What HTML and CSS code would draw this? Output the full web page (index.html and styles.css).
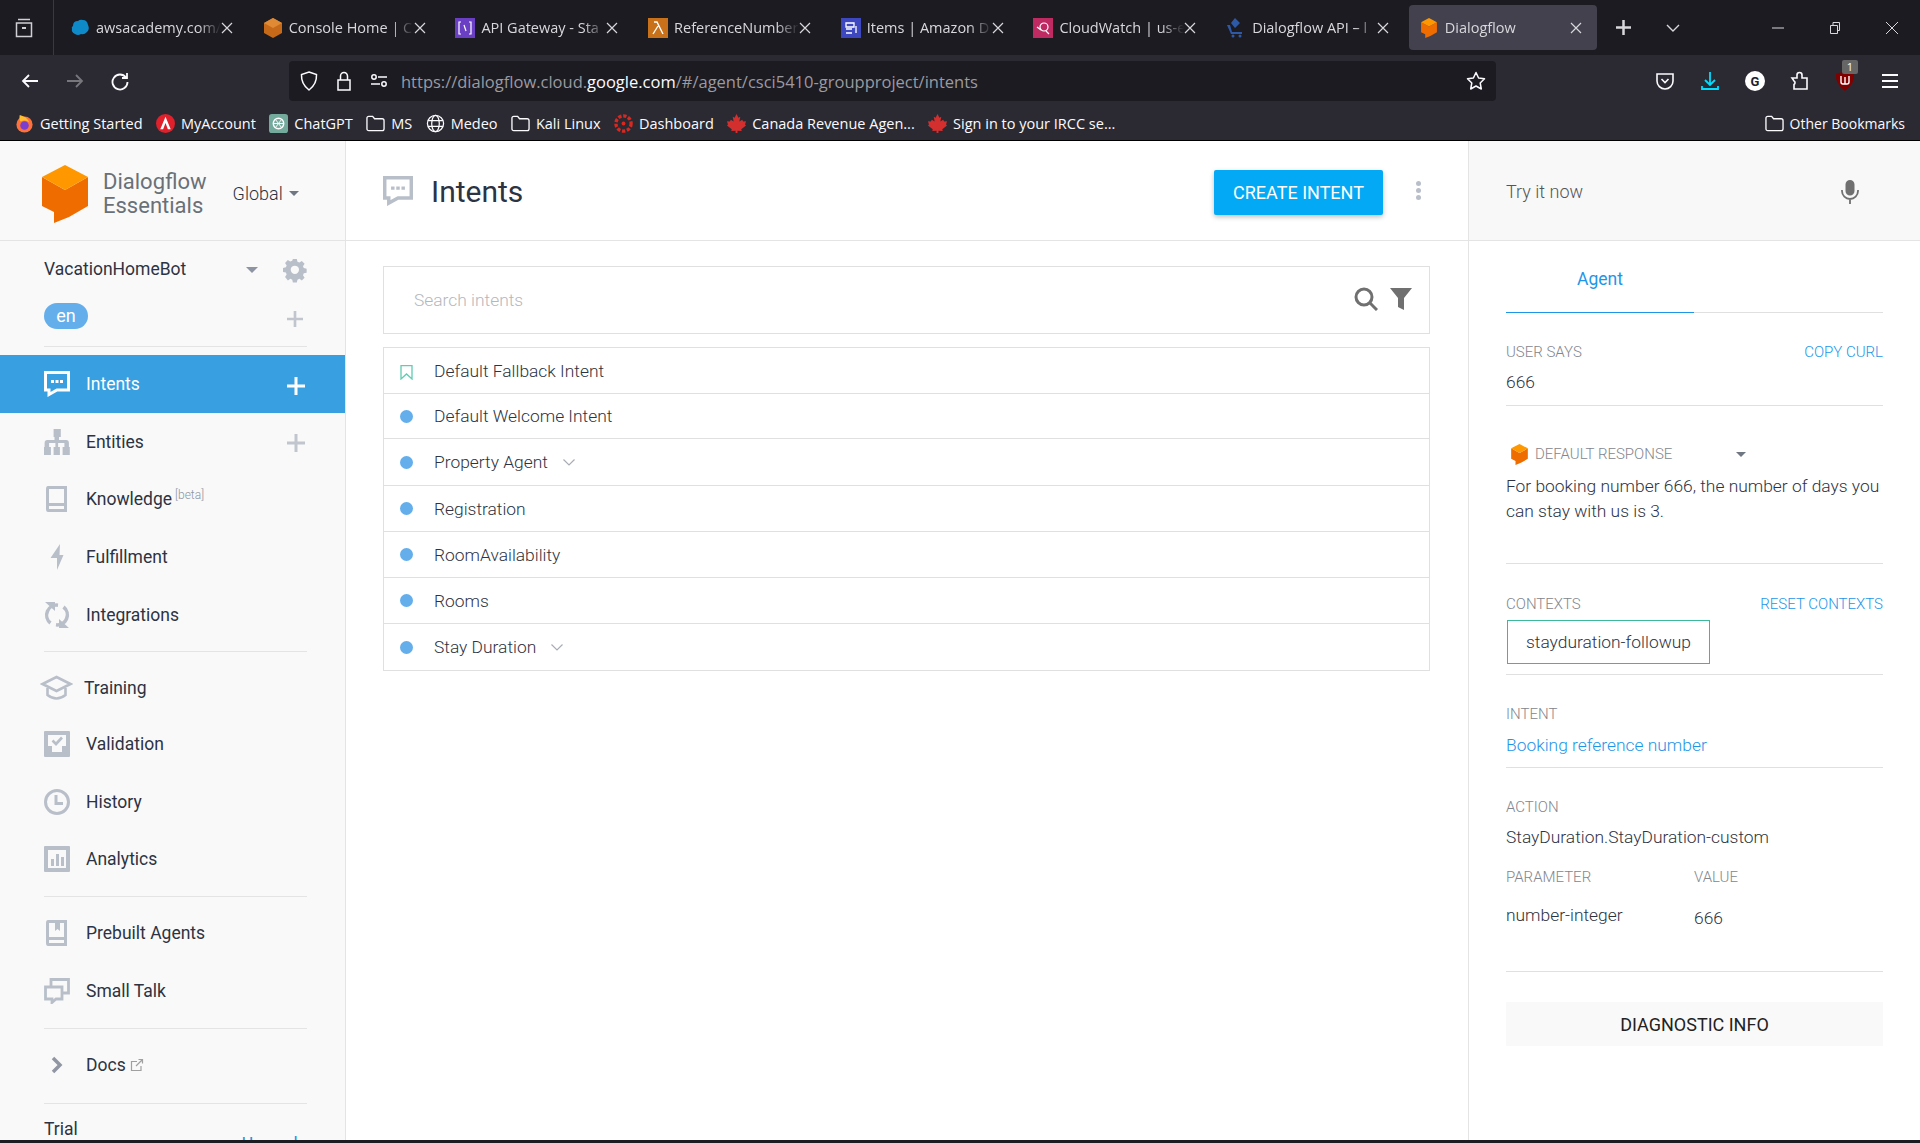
FILE: index.html
```html
<!DOCTYPE html>
<html>
<head>
    <title>Dialogflow</title>
    <meta charset="UTF-8">
    <link rel="stylesheet" href="styles.css">
</head>
<body>
    <svg class="defs" width="0" height="0">
        <symbol id="cube" viewBox="0 0 46 58">
            <path fill="#ef6c00" d="M0 12 23 25 46 12V41L27 52 12 58V47L0 41Z"/>
            <path fill="#ff9800" d="M23 0 46 12 23 25 0 12Z"/>
        </symbol>
        <symbol id="plus" viewBox="0 0 18 18">
            <path fill="currentColor" d="M7.5 0h3v7.5H18v3h-7.5V18h-3v-7.5H0v-3h7.5z"/>
        </symbol>
        <symbol id="close" viewBox="0 0 12 12">
            <path fill="none" stroke="currentColor" stroke-width="1.2" d="M1 1l10 10M11 1L1 11"/>
        </symbol>
        <symbol id="folder" viewBox="0 0 20 18">
            <path fill="none" stroke="currentColor" stroke-width="1.4" d="M1 3.5Q1 1.5 3 1.5H7L9 4H17Q19 4 19 6V14.5Q19 16.5 17 16.5H3Q1 16.5 1 14.5Z"/>
        </symbol>
        <symbol id="maple" viewBox="0 0 20 20">
            <path fill="#d32f2f" d="M10 0l2 4 2-1-1 5 3-2 1 2 3-.5-1 3.500 1 1-5 4 .5 2-4.500-.5V20H9v-2.500L4.500 18l.5-2-5-4 1-1-1-3.500L3 8l1-2 3 2-1-5 2 1z"/>
        </symbol>
        <symbol id="chat" viewBox="0 0 26 26">
            <path fill="none" stroke="currentColor" stroke-width="3" d="M1.500 1.500H24.500V19H13L5 23.500V19H1.500Z"/>
            <path fill="currentColor" d="M7 9h3v3H7zM11.500 9h3v3h-3zM16 9h3v3h-3z"/>
        </symbol>
    </svg>

    <header class="browser">
        <div class="tab-bar">
            <div class="view-btn">
                <svg width="18" height="20" viewBox="0 0 18 20"><path fill="none" stroke="#d0d0d4" stroke-width="1.500" d="M3 1.500H15M1.500 5H16.500V18.500H1.500Z"/><path fill="#d0d0d4" d="M7 9h4v2H7z"/></svg>
            </div>
            <div class="tabs">
                <div class="tab">
                    <svg class="favicon" viewBox="0 0 20 20"><path fill="#0f8ac9" d="M3 8Q3 3 8 3 10 1 13 2 17 2 18 7 20 11 17 14 14 17 11 16 8 18 5 16 1 14 2 11 1 9 3 8Z"/></svg>
                    <span class="tab-title">awsacademy.com/</span>
                    <svg class="tab-close"><use href="#close"/></svg>
                </div>
                <div class="tab">
                    <svg class="favicon" viewBox="0 0 18 20"><path fill="#c66a1a" d="M9 0 18 5V15L9 20 0 15V5Z"/><path fill="#e08a35" d="M9 0 18 5 9 10 0 5Z"/></svg>
                    <span class="tab-title">Console Home | C</span>
                    <svg class="tab-close"><use href="#close"/></svg>
                </div>
                <div class="tab">
                    <svg class="favicon" viewBox="0 0 20 20"><path fill="#6b3fc4" d="M0 0h20v20H0z"/><path fill="none" stroke="#fff" stroke-width="1.200" d="M6 4H4V16H6M14 4h2V16H14M9 7l2 6"/></svg>
                    <span class="tab-title">API Gateway - Sta</span>
                    <svg class="tab-close"><use href="#close"/></svg>
                </div>
                <div class="tab">
                    <svg class="favicon" viewBox="0 0 20 20"><path fill="#c8701a" d="M0 0h20v20H0z"/><path fill="none" stroke="#fff" stroke-width="1.400" d="M6 4H9L15 16M10 8 5 16"/></svg>
                    <span class="tab-title">ReferenceNumber</span>
                    <svg class="tab-close"><use href="#close"/></svg>
                </div>
                <div class="tab">
                    <svg class="favicon" viewBox="0 0 20 20"><path fill="#3d48c0" d="M0 0h20v20H0z"/><path fill="none" stroke="#fff" stroke-width="1.300" d="M5 5H13V9H5ZM5 11H11M5 15H11M15 8V15"/></svg>
                    <span class="tab-title">Items | Amazon D</span>
                    <svg class="tab-close"><use href="#close"/></svg>
                </div>
                <div class="tab">
                    <svg class="favicon" viewBox="0 0 20 20"><path fill="#bf2a62" d="M0 0h20v20H0z"/><circle cx="11" cy="9" r="4" fill="none" stroke="#fff" stroke-width="1.200"/><path fill="none" stroke="#fff" stroke-width="1.200" d="M8 12 4 9M13 13l3 3"/></svg>
                    <span class="tab-title">CloudWatch | us-e</span>
                    <svg class="tab-close"><use href="#close"/></svg>
                </div>
                <div class="tab">
                    <svg class="favicon" viewBox="0 0 20 20"><path fill="#2d5aa8" d="M9 0 14 5 9 10 5 5ZM1 7H4L6 14H16V16H5Z"/><circle cx="7" cy="18" r="1.500" fill="#2d5aa8"/><circle cx="14" cy="18" r="1.500" fill="#2d5aa8"/></svg>
                    <span class="tab-title">Dialogflow API – l</span>
                    <svg class="tab-close"><use href="#close"/></svg>
                </div>
                <div class="tab active">
                    <svg class="favicon" viewBox="0 0 46 58"><use href="#cube"/></svg>
                    <span class="tab-title">Dialogflow</span>
                    <svg class="tab-close"><use href="#close"/></svg>
                </div>
            </div>
            <svg class="new-tab"><use href="#plus"/></svg>
            <svg class="tab-list" viewBox="0 0 14 8"><path fill="none" stroke="currentColor" stroke-width="1.400" d="M1 1l6 6 6-6"/></svg>
            <div class="window-btns">
                <svg viewBox="0 0 14 14"><path stroke="currentColor" d="M1 7h12"/></svg>
                <svg viewBox="0 0 14 14"><path fill="none" stroke="currentColor" d="M2.500 4.500h7v8h-7zM5 4.500V1.500h6.500v8h-2"/></svg>
                <svg viewBox="0 0 14 14"><path fill="none" stroke="currentColor" d="M1 1l12 12M13 1L1 13"/></svg>
            </div>
        </div>

        <div class="toolbar">
            <div class="nav-btns">
                <svg viewBox="0 0 20 20"><path fill="none" stroke="#fbfbfe" stroke-width="1.800" d="M18 10H3M9 4l-6 6 6 6"/></svg>
                <svg class="dim" viewBox="0 0 20 20"><path fill="none" stroke="#77767d" stroke-width="1.800" d="M2 10H17M11 4l6 6-6 6"/></svg>
                <svg viewBox="0 0 20 20"><path fill="none" stroke="#fbfbfe" stroke-width="1.800" d="M16 6.500A7.500 7.500 0 1 0 17.500 11M17 2V7H12"/></svg>
            </div>
            <div class="urlbar">
                <svg class="url-icon" viewBox="0 0 18 20"><path fill="none" stroke="#fbfbfe" stroke-width="1.500" d="M9 1 16.500 3.500Q17 13 9 19 1 13 1.500 3.500Z"/></svg>
                <svg class="url-icon" viewBox="0 0 18 20"><path fill="none" stroke="#fbfbfe" stroke-width="1.500" d="M3 9H15V19H3ZM5.500 9V5A3.500 3.500 0 0 1 12.500 5V9"/></svg>
                <svg class="url-icon" viewBox="0 0 18 20"><path fill="none" stroke="#fbfbfe" stroke-width="1.500" d="M8 6H17M1 13H10"/><circle cx="4" cy="6" r="2.200" fill="none" stroke="#fbfbfe" stroke-width="1.500"/><circle cx="14" cy="13" r="2.200" fill="none" stroke="#fbfbfe" stroke-width="1.500"/></svg>
                <span class="url">https://dialogflow.cloud.<b>google.com</b>/#/agent/csci5410-groupproject/intents</span>
                <svg class="url-star" viewBox="0 0 20 20"><path fill="none" stroke="#fbfbfe" stroke-width="1.500" stroke-linejoin="round" d="M10 1.500 12.600 7 18.500 7.800 14.200 12 15.300 18 10 15 4.700 18 5.800 12 1.500 7.800 7.400 7Z"/></svg>
            </div>
            <div class="ext-btns">
                <svg viewBox="0 0 20 20"><path fill="none" stroke="#fbfbfe" stroke-width="1.600" d="M2 3H18V10A8 8 0 0 1 2 10Z"/><path fill="none" stroke="#fbfbfe" stroke-width="1.600" d="M6.500 8 10 11.500 13.500 8"/></svg>
                <svg viewBox="0 0 20 20"><path fill="none" stroke="#00ddff" stroke-width="1.800" d="M10 1V14M5 9l5 5 5-5M2 15v3H18v-3"/></svg>
                <svg viewBox="0 0 20 20"><circle cx="10" cy="10" r="10" fill="#fff"/><text class="g-letter" x="10" y="14.500" text-anchor="middle">G</text></svg>
                <svg viewBox="0 0 20 20"><path fill="none" stroke="#fbfbfe" stroke-width="1.600" d="M2 7H7V4A2.500 2.500 0 0 1 12 4V7H17V18H4V13.500A2 2 0 0 0 4 10Z"/></svg>
                <div class="ublock">
                    <svg viewBox="0 0 20 20"><path fill="#800000" d="M10 0 19 3Q20 13 10 20 0 13 1 3Z"/><path fill="none" stroke="#fff" stroke-width="1.400" d="M6 5V11Q6 13 8 13H12Q14 13 14 11V5M10 6V13"/></svg>
                    <span class="ublock-count">1</span>
                </div>
                <svg viewBox="0 0 20 20"><path stroke="#fbfbfe" stroke-width="1.800" d="M2 4H18M2 10H18M2 16H18"/></svg>
            </div>
        </div>

        <div class="bookmarks">
            <div class="mark">
                <svg viewBox="0 0 20 20"><circle cx="10" cy="11" r="8.500" fill="#ff7139"/><circle cx="10" cy="12" r="4.500" fill="#7b3fd0"/><path fill="#ffbd30" d="M5 1Q4 6 6 8 11 5 15 9 13 3 5 1Z"/></svg>
                Getting Started
            </div>
            <div class="mark">
                <svg viewBox="0 0 20 20"><circle cx="10" cy="10" r="10" fill="#e0212b"/><path fill="#fff" d="M10 3 15.500 16H12.500L10 9.500 7.500 16H4.500Z"/></svg>
                MyAccount
            </div>
            <div class="mark">
                <svg viewBox="0 0 20 20"><rect width="20" height="20" rx="3" fill="#74aa9c"/><circle cx="10" cy="10" r="5.500" fill="none" stroke="#fff" stroke-width="1.500"/><path fill="none" stroke="#fff" d="M7 6l6 8M13 6l-6 8M5 10h10"/></svg>
                ChatGPT
            </div>
            <div class="mark"><svg><use href="#folder"/></svg>MS</div>
            <div class="mark">
                <svg viewBox="0 0 20 20"><g fill="none" stroke="#fbfbfe" stroke-width="1.300"><circle cx="10" cy="10" r="8.500"/><ellipse cx="10" cy="10" rx="4" ry="8.500"/><path d="M2 7H18M2 13H18"/></g></svg>
                Medeo
            </div>
            <div class="mark"><svg><use href="#folder"/></svg>Kali Linux</div>
            <div class="mark">
                <svg viewBox="0 0 20 20"><circle cx="10" cy="10" r="8" fill="none" stroke="#d8281f" stroke-width="3.500" stroke-dasharray="3.500 1.800"/><circle cx="10" cy="10" r="2" fill="#d8281f"/></svg>
                Dashboard
            </div>
            <div class="mark"><svg><use href="#maple"/></svg>Canada Revenue Agen...</div>
            <div class="mark"><svg><use href="#maple"/></svg>Sign in to your IRCC se...</div>
            <div class="mark other"><svg><use href="#folder"/></svg>Other Bookmarks</div>
        </div>
    </header>

    <div class="app">
        <aside class="sidebar">
            <div class="brand">
                <svg class="brand-logo"><use href="#cube"/></svg>
                <div class="brand-name">Dialogflow<br>Essentials</div>
                <div class="region">Global<span class="caret"></span></div>
            </div>

            <div class="agent">
                <div class="agent-row">
                    <span class="agent-name">VacationHomeBot</span>
                    <span class="caret agent-caret"></span>
                    <svg class="gear" viewBox="-2 -1 30 30"><path fill="#b9bfc9" fill-rule="evenodd" d="M10.500 0h5l.8 3.600 2.400 1 3.100-2 3.500 3.500-2 3.100 1 2.400 3.600.8v5l-3.600.8-1 2.400 2 3.100-3.500 3.500-3.100-2-2.400 1-.8 3.600h-5l-.8-3.600-2.400-1-3.100 2L.6 22.700l2-3.100-1-2.400L-2 16.400v-5l3.600-.8 1-2.400-2-3.100L4.100 1.200l3.100 2 2.400-1zM13 8.500a5 5 0 1 0 0 10.500 5 5 0 0 0 0-10.500z"/></svg>
                </div>
                <div class="lang-row">
                    <span class="lang-pill">en</span>
                    <svg class="add-lang"><use href="#plus"/></svg>
                </div>
            </div>

            <nav class="nav-group first">
                <a class="nav-item active">
                    <svg class="nav-icon" viewBox="0 0 26 26"><use href="#chat"/></svg>
                    <span>Intents</span>
                    <svg class="nav-add"><use href="#plus"/></svg>
                </a>
                <a class="nav-item">
                    <svg class="nav-icon" viewBox="0 0 26 26"><path fill="currentColor" d="M9 0h8v8h-2v3h8q3 0 3 3v4h1v8h-8v-8h2v-4h-7v4h2v8H9v-8h2v-4H4v4h2v8h-8v-8h1v-4q0-3 3-3h8V8H9z" transform="translate(1.500 0) scale(.9 1)"/></svg>
                    <span>Entities</span>
                    <svg class="nav-add"><use href="#plus"/></svg>
                </a>
                <a class="nav-item">
                    <svg class="nav-icon" viewBox="0 0 26 26"><path fill="currentColor" fill-rule="evenodd" d="M4 0H23V26H4Q2 26 2 23V3Q2 0 4 0ZM5 3V17H20V3ZM5 20V23H20V20Z"/></svg>
                    <span>Knowledge<sup class="beta">[beta]</sup></span>
                </a>
                <a class="nav-item">
                    <svg class="nav-icon" viewBox="0 0 26 26"><path fill="currentColor" d="M16 0 6.500 14H13V26L19.500 11H15.500Z"/></svg>
                    <span>Fulfillment</span>
                </a>
                <a class="nav-item">
                    <svg class="nav-icon" viewBox="0 0 26 26"><g fill="none" stroke="currentColor" stroke-width="3.500"><path d="M14 3.200A10 10 0 0 0 6.500 21"/><path d="M12 22.800A10 10 0 0 0 19.500 5"/></g><path fill="currentColor" d="M1 0H11V9ZM25 26H15V17Z"/></svg>
                    <span>Integrations</span>
                </a>
            </nav>

            <nav class="nav-group second">
                <a class="nav-item training">
                    <svg class="nav-icon" viewBox="0 0 32 26"><g fill="none" stroke="currentColor" stroke-width="2.600"><path d="M16 2 30 9 16 16 2 9Z"/><path d="M7 13V20Q16 27 25 20V13"/></g></svg>
                    <span>Training</span>
                </a>
                <a class="nav-item">
                    <svg class="nav-icon" viewBox="0 0 26 26"><path fill="currentColor" fill-rule="evenodd" d="M1 0H25Q26 0 26 1V25Q26 26 25 26H1Q0 26 0 25V1Q0 0 1 0ZM4 4V15H8V21H18V15H22V4Z"/><path fill="none" stroke="currentColor" stroke-width="2.600" d="M8.500 9.500 12 13 18 6.500"/></svg>
                    <span>Validation</span>
                </a>
                <a class="nav-item">
                    <svg class="nav-icon" viewBox="0 0 26 26"><g fill="none" stroke="currentColor" stroke-width="3"><circle cx="13" cy="13" r="11.500"/><path d="M12 6V14.500H19"/></g></svg>
                    <span>History</span>
                </a>
                <a class="nav-item">
                    <svg class="nav-icon" viewBox="0 0 26 26"><path fill="currentColor" fill-rule="evenodd" d="M1 0H25Q26 0 26 1V25Q26 26 25 26H1Q0 26 0 25V1Q0 0 1 0ZM4 4V22H22V4ZM7 13h3v7H7zM12 8h3v12h-3zM17 11h3v9h-3z"/></svg>
                    <span>Analytics</span>
                </a>
            </nav>

            <nav class="nav-group third">
                <a class="nav-item">
                    <svg class="nav-icon" viewBox="0 0 26 26"><path fill="currentColor" fill-rule="evenodd" d="M4 0H23V26H4Q2 26 2 23V3Q2 0 4 0ZM5 3V17H20V3H16V11L13.500 9 11 11V3ZM5 20V23H20V20Z"/></svg>
                    <span>Prebuilt Agents</span>
                </a>
                <a class="nav-item">
                    <svg class="nav-icon" viewBox="0 0 26 26"><g fill="none" stroke="currentColor" stroke-width="2.800"><path d="M1.500 9H18V21H12L8 24.500V21H1.500Z"/><path d="M7 9V1.500H24.500V15H18"/></g></svg>
                    <span>Small Talk</span>
                </a>
            </nav>

            <nav class="nav-group fourth">
                <a class="nav-item">
                    <svg class="nav-icon" viewBox="0 0 26 26"><path fill="none" stroke="#9096a2" stroke-width="3.500" d="M9 6 16 13 9 20"/></svg>
                    <span>Docs</span>
                    <svg class="ext-link" viewBox="0 0 14 14"><path fill="none" stroke="#a0a0a0" stroke-width="1.200" d="M11 8V12.500H1.500V3.500H7M6 8 12.500 1.500M8.500 1.500H12.500V5.500"/></svg>
                </a>
            </nav>

            <div class="trial">
                <span>Trial</span>
                <a class="upgrade">Upgrade</a>
            </div>
        </aside>

        <main class="main">
            <div class="main-header">
                <svg class="title-icon" viewBox="0 0 26 26"><use href="#chat"/></svg>
                <h1>Intents</h1>
                <button class="create-btn">CREATE INTENT</button>
                <span class="more-dots"><i></i><i></i><i></i></span>
            </div>
            <div class="main-body">
                <div class="search-box">
                    <span class="search-text">Search intents</span>
                    <svg class="search-icon" viewBox="0 0 24 24"><g fill="none" stroke="#707070" stroke-width="3"><circle cx="10" cy="10" r="8"/><path d="M15.500 15.500 23 23"/></g></svg>
                    <svg class="filter-icon" viewBox="0 0 22 22"><path fill="#707070" d="M0 0H22L14 10V22L8 19V10Z"/></svg>
                </div>
                <ul class="intent-list">
                    <li class="intent">
                        <svg class="fallback-icon" viewBox="0 0 13 15"><path fill="none" stroke="#5fcdb0" stroke-width="1.300" d="M1 .7H12V14L6.500 9 1 14Z"/></svg>
                        Default Fallback Intent
                    </li>
                    <li class="intent"><span class="dot"></span>Default Welcome Intent</li>
                    <li class="intent">
                        <span class="dot"></span>Property Agent
                        <svg class="expand" viewBox="0 0 12 7"><path fill="none" stroke="#a8adb5" stroke-width="1.200" d="M.5.500 6 6 11.500.500"/></svg>
                    </li>
                    <li class="intent"><span class="dot"></span>Registration</li>
                    <li class="intent"><span class="dot"></span>RoomAvailability</li>
                    <li class="intent"><span class="dot"></span>Rooms</li>
                    <li class="intent">
                        <span class="dot"></span>Stay Duration
                        <svg class="expand" viewBox="0 0 12 7"><path fill="none" stroke="#a8adb5" stroke-width="1.200" d="M.5.500 6 6 11.500.500"/></svg>
                    </li>
                </ul>
            </div>
        </main>

        <aside class="console">
            <div class="try-bar">
                <span>Try it now</span>
                <svg class="mic" viewBox="0 0 18 24"><path fill="#707070" d="M9 0A4.500 4.500 0 0 1 13.500 4.500V11A4.500 4.500 0 0 1 4.500 11V4.500A4.500 4.500 0 0 1 9 0Z"/><path fill="none" stroke="#707070" stroke-width="1.800" d="M1 10V11A8 8 0 0 0 17 11V10M9 19V24"/></svg>
            </div>
            <div class="console-body">
                <div class="console-tabs"><span class="console-tab">Agent</span></div>

                <section class="panel says">
                    <div class="panel-head">
                        <span class="label">USER SAYS</span>
                        <a class="label-link">COPY CURL</a>
                    </div>
                    <div class="value says-value">666</div>
                </section>

                <section class="panel response">
                    <div class="response-head">
                        <svg class="response-logo"><use href="#cube"/></svg>
                        <span class="label">DEFAULT RESPONSE</span>
                        <span class="caret response-caret"></span>
                    </div>
                    <p class="response-text">For booking number 666, the number of days you can stay with us is 3.</p>
                </section>

                <section class="panel contexts">
                    <div class="panel-head">
                        <span class="label">CONTEXTS</span>
                        <a class="label-link">RESET CONTEXTS</a>
                    </div>
                    <div class="context-chip">stayduration-followup</div>
                </section>

                <section class="panel intent-info">
                    <span class="label">INTENT</span>
                    <a class="intent-link">Booking reference number</a>
                </section>

                <section class="panel action">
                    <span class="label">ACTION</span>
                    <div class="value action-value">StayDuration.StayDuration-custom</div>
                    <div class="param-grid">
                        <span class="label">PARAMETER</span>
                        <span class="label">VALUE</span>
                        <span class="value">number-integer</span>
                        <span class="value param-value">666</span>
                    </div>
                </section>

                <div class="diag">DIAGNOSTIC INFO</div>
            </div>
        </aside>
    </div>
    <div class="taskbar"></div>
</body>
</html>
```

FILE: styles.css
```css
* {
    box-sizing: border-box;
}
html, body {
    margin: 0;
    height: 1143px;
    overflow: hidden;
}
body {
    display: flex;
    flex-direction: column;
    background-color: #fff;
    font-family: Roboto, sans-serif;
    color: #2d3342;
}
.defs {
    position: absolute;
}
ul {
    list-style: none;
    margin: 0;
    padding: 0;
}

/* browser chrome */
.browser {
    height: 141px;
    flex: none;
    background-color: #2b2a33;
    border-bottom: 1px solid #000;
    font-family: "Open Sans", sans-serif;
    color: #fbfbfe;
}
.tab-bar {
    height: 55px;
    display: flex;
    align-items: center;
    background-color: #1c1b22;
}
.view-btn {
    width: 54px;
    height: 55px;
    display: flex;
    align-items: center;
    justify-content: center;
    border-right: 1px solid #3a3942;
    margin-right: 6px;
    padding-right: 5px;
}
.tabs {
    display: flex;
    gap: 4.7px;
}
.tab {
    width: 188px;
    height: 45px;
    display: flex;
    align-items: center;
    padding: 0 15px 0 10px;
    border-radius: 4px;
    font-size: 14.5px;
    color: #d8d8dc;
}
.tab.active {
    background-color: #42414d;
}
.favicon {
    width: 20px;
    height: 20px;
    flex: none;
    margin-right: 6px;
}
.tab-title {
    flex: 1;
    white-space: nowrap;
    overflow: hidden;
    -webkit-mask-image: linear-gradient(to right, #000 82%, transparent);
    mask-image: linear-gradient(to right, #000 82%, transparent);
}
.tab-close {
    width: 12px;
    height: 12px;
    flex: none;
    color: #d8d8dc;
}
.new-tab {
    width: 15px;
    height: 15px;
    margin-left: 19px;
    color: #d8d8dc;
}
.tab-list {
    width: 14px;
    height: 8px;
    margin-left: 35px;
    color: #d8d8dc;
}
.window-btns {
    display: flex;
    gap: 43px;
    margin-left: auto;
    margin-right: 21px;
    color: #d8d8dc;
}
.window-btns svg {
    width: 14px;
    height: 14px;
}

.toolbar {
    height: 51px;
    display: flex;
    align-items: center;
}
.nav-btns {
    display: flex;
    gap: 25px;
    margin-left: 20px;
    width: 269px;
}
.nav-btns svg {
    width: 20px;
    height: 20px;
}
.urlbar {
    width: 1207px;
    height: 40px;
    display: flex;
    align-items: center;
    gap: 17px;
    padding: 0 10px 0 11px;
    background-color: #1c1b22;
    border-radius: 4px;
}
.url-icon {
    width: 18px;
    height: 20px;
    flex: none;
}
.url {
    flex: 1;
    font-size: 16.5px;
    color: #9a9aa0;
    white-space: nowrap;
    margin: 1px 0 0 -4px;
}
.url b {
    font-weight: 400;
    color: #fbfbfe;
}
.url-star {
    width: 20px;
    height: 20px;
}
.ext-btns {
    display: flex;
    align-items: center;
    gap: 25px;
    margin-left: 159px;
}
.ext-btns svg {
    width: 20px;
    height: 20px;
    display: block;
}
.g-letter {
    font: 700 13px Roboto, sans-serif;
    fill: #222;
}
.ublock {
    position: relative;
    width: 20px;
    height: 20px;
}
.ublock-count {
    position: absolute;
    top: -11px;
    left: 7px;
    width: 16px;
    height: 14px;
    background-color: #666;
    border-radius: 2px;
    font-size: 11px;
    line-height: 14px;
    text-align: center;
}

.bookmarks {
    height: 34px;
    display: flex;
    align-items: center;
    gap: 13.4px;
    padding: 0 15px;
    font-size: 14.5px;
}
.mark {
    display: flex;
    align-items: center;
    gap: 6px;
    white-space: nowrap;
}
.mark svg {
    width: 19px;
    height: 19px;
    flex: none;
}
.mark.other {
    margin-left: auto;
    font-size: 14px;
}

/* app */
.app {
    flex: 1;
    min-height: 0;
    display: flex;
    overflow: hidden;
}
.caret {
    display: inline-block;
    border-top: 5px solid #6f7782;
    border-left: 5px solid transparent;
    border-right: 5px solid transparent;
}

/* sidebar */
.sidebar {
    width: 346px;
    flex: none;
    display: flex;
    flex-direction: column;
    overflow: hidden;
    background-color: #f9f9f9;
    border-right: 1px solid #e4e4e4;
    font-size: 17.5px;
}
.brand {
    height: 100px;
    flex: none;
    display: flex;
    align-items: center;
    padding: 6px 0 0 42px;
    border-bottom: 1px solid #e4e4e4;
}
.brand-logo {
    width: 46px;
    height: 58px;
}
.brand-name {
    margin-left: 15px;
    font-family: Roboto, sans-serif;
    font-size: 22px;
    line-height: 24px;
    color: #6a7077;
}
.region {
    margin-left: 26px;
    font-size: 18px;
    font-weight: 300;
    color: #2d3342;
    display: flex;
    align-items: center;
    gap: 6px;
}
.agent {
    height: 106px;
    flex: none;
    margin: 0 38px 0 44px;
    border-bottom: 1px solid #e4e4e4;
}
.agent-row {
    height: 55px;
    display: flex;
    align-items: center;
}
.agent-caret {
    margin-left: 60px;
    margin-top: 3px;
    border-top-color: #8d94a3;
    border-width: 6px 6px 0;
}
.gear {
    width: 26px;
    height: 26px;
    margin-left: 25px;
    margin-top: 2px;
}
.lang-row {
    display: flex;
    align-items: center;
    justify-content: space-between;
    height: 30px;
    margin-top: 5px;
    padding-right: 4px;
}
.lang-pill {
    width: 44px;
    height: 26px;
    border-radius: 13px;
    background-color: #64aeeb;
    color: #fff;
    font-size: 18px;
    line-height: 25px;
    text-align: center;
}
.add-lang {
    width: 16px;
    height: 16px;
    margin-top: 6px;
    color: #c0c5ce;
}

.nav-group {
    flex: none;
    display: block;
    position: relative;
}
.nav-group.first {
    margin-top: 8px;
    padding-bottom: 9px;
}
.nav-group.second {
    padding-top: 9px;
    padding-bottom: 9px;
}
.nav-group.third {
    padding-top: 7px;
    padding-bottom: 10px;
}
.nav-group.fourth {
    padding-top: 7px;
    padding-bottom: 10px;
}
.nav-group::after {
    content: "";
    display: block;
    position: absolute;
    bottom: 0;
    left: 44px;
    right: 38px;
    border-bottom: 1px solid #e4e4e4;
}
.nav-item {
    height: 57.6px;
    display: flex;
    align-items: center;
    padding-left: 44px;
    padding-right: 38px;
    color: #2d3342;
}
.nav-item > span {
    margin-left: 16px;
}
.nav-item.active {
    height: 58px;
    background-color: #389fe0;
    color: #fff;
}
.nav-icon {
    width: 26px;
    height: 26px;
    flex: none;
    color: #b9bfc9;
}
.nav-item.active .nav-icon {
    color: #fff;
}
.nav-item.training {
    height: 54px;
    padding-left: 40px;
}
.nav-item.training .nav-icon {
    width: 33px;
}
.nav-item.training > span {
    margin-left: 11px;
}
.nav-add {
    width: 18px;
    height: 18px;
    margin-left: auto;
    margin-right: 2px;
    margin-top: 3px;
    color: #c0c5ce;
}
.nav-item.active .nav-add {
    color: #fff;
}
.beta {
    margin-left: 3px;
    font-size: 12px;
    font-weight: 300;
    color: #8d94a3;
    vertical-align: 6px;
    line-height: 0;
}
.ext-link {
    width: 14px;
    height: 14px;
    margin-left: 4px;
}
.trial {
    display: flex;
    justify-content: space-between;
    margin: 15px 38px 0 44px;
}
.upgrade {
    margin-top: 15px;
    color: #1e96e8;
}

/* intents list */
.main {
    flex: 1;
    min-width: 0;
    border-right: 1px solid #e4e4e4;
}
.main-header {
    height: 100px;
    display: flex;
    align-items: center;
    padding-left: 37px;
    border-bottom: 1px solid #e4e4e4;
}
.title-icon {
    width: 30px;
    height: 30px;
    margin-top: 1px;
    color: #b9bfc9;
}
.main-header h1 {
    margin: 2px 0 0 18px;
    font-size: 30px;
    font-weight: 400;
}
.create-btn {
    width: 169px;
    height: 45px;
    margin-left: auto;
    margin-top: 4px;
    border: none;
    border-radius: 2px;
    background-color: #03a9f4;
    color: #fff;
    font-family: Roboto, sans-serif;
    font-size: 18px;
    box-shadow: 0 2px 5px rgba(0,0,0,0.26);
}
.more-dots {
    display: flex;
    flex-direction: column;
    gap: 2px;
    margin: 0 47px 0 33px;
}
.more-dots i {
    display: block;
    width: 5px;
    height: 5px;
    border-radius: 50%;
    background-color: #b9bfc9;
}
.main-body {
    padding: 25px 38px 0 37px;
}
.search-box {
    height: 68px;
    display: flex;
    align-items: center;
    padding: 0 17px 0 30px;
    border: 1px solid #e0e0e0;
}
.search-text {
    flex: 1;
    font-size: 17.4px;
    font-weight: 300;
    color: #b4b7bd;
}
.search-icon {
    width: 24px;
    height: 24px;
    margin-top: -3px;
}
.filter-icon {
    width: 22px;
    height: 22px;
    margin-left: 12px;
    margin-top: -3px;
}
.intent-list {
    margin-top: 13px;
    border: 1px solid #e0e0e0;
    border-bottom: none;
}
.intent {
    height: 46px;
    display: flex;
    align-items: center;
    gap: 0;
    padding-left: 16px;
    border-bottom: 1px solid #e0e0e0;
    font-size: 17.4px;
    font-weight: 300;
}
.intent:nth-child(2) {
    height: 45px;
}
.intent:nth-child(3), .intent:nth-child(7) {
    height: 47px;
}
.dot {
    width: 13px;
    height: 13px;
    margin-right: 21px;
    border-radius: 50%;
    background-color: #64aeeb;
}
.fallback-icon {
    width: 13px;
    height: 15px;
    margin-right: 21px;
    margin-top: 4px;
}
.expand {
    width: 12px;
    height: 7px;
    margin-left: 15px;
}

/* try it now panel */
.console {
    width: 451px;
    flex: none;
}
.try-bar {
    height: 100px;
    display: flex;
    align-items: center;
    justify-content: space-between;
    padding: 2px 61px 0 37px;
    background-color: #f8f8f8;
    border-bottom: 1px solid #e4e4e4;
    font-size: 18px;
    font-weight: 300;
    color: #555;
}
.mic {
    width: 18px;
    height: 24px;
}
.console-body {
    padding: 0 37px;
}
.console-tabs {
    height: 72px;
    border-bottom: 1px solid #e0e0e0;
}
.console-tab {
    display: block;
    width: 188px;
    height: 72px;
    padding-top: 28px;
    border-bottom: 1px solid #1e96e8;
    color: #1e96e8;
    font-size: 17.5px;
    text-align: center;
}
.panel {
    border-bottom: 1px solid #e0e0e0;
}
.panel-head {
    display: flex;
    justify-content: space-between;
}
.label {
    display: block;
    font-size: 15px;
    font-weight: 300;
    line-height: 20px;
    color: #82868e;
}
.label-link {
    font-size: 15px;
    font-weight: 300;
    line-height: 20px;
    color: #1e96e8;
}
.value {
    font-size: 17.4px;
    font-weight: 300;
    line-height: 24px;
}
.says {
    height: 93px;
    padding-top: 29px;
}
.says-value {
    margin-top: 8px;
}
.response {
    height: 158px;
    padding-top: 37px;
}
.response-head {
    display: flex;
    align-items: center;
    height: 22px;
    padding-left: 5px;
}
.response-logo {
    width: 17px;
    height: 21px;
    margin-right: 7px;
}
.response-caret {
    margin-left: 64px;
}
.response-text {
    margin: 9px 0 0;
    font-size: 17.4px;
    font-weight: 300;
    line-height: 25px;
}
.contexts {
    height: 111px;
    padding-top: 30px;
}
.context-chip {
    width: 203px;
    height: 44px;
    margin: 6px 0 0 1px;
    border: 1px solid #3cb99a;
    font-size: 17.4px;
    font-weight: 300;
    line-height: 42px;
    text-align: center;
}
.intent-info {
    height: 93px;
    padding-top: 29px;
}
.intent-link {
    display: block;
    margin-top: 9px;
    font-size: 17.4px;
    font-weight: 300;
    line-height: 24px;
    color: #1e96e8;
}
.action {
    height: 204px;
    padding-top: 29px;
}
.action-value {
    margin-top: 8px;
}
.param-grid {
    display: grid;
    grid-template-columns: 188px 1fr;
    row-gap: 16px;
    margin-top: 18px;
}
.param-value {
    margin-top: 3px;
}
.diag {
    height: 44px;
    margin-top: 30px;
    padding-top: 1px;
    background-color: #f9f9f9;
    font-size: 18px;
    line-height: 44px;
    text-align: center;
    color: #222;
}
.taskbar {
    height: 3px;
    flex: none;
    background-color: #1c1b22;
}
```
